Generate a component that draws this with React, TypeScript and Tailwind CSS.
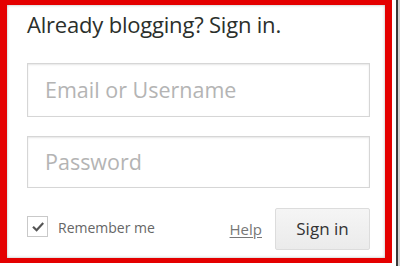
import React from "react";

export default function App() {
  const font = { fontFamily: '"Open Sans", "Noto Sans", sans-serif' };
  return (
    <div className="w-[400px] h-[266px] bg-white flex overflow-hidden" style={font}>
      <div className="w-[392px] h-[263px] border-l-[7px] border-r-[7px] border-t-[5px] border-b-[5px] border-[#e40000] bg-white shadow-[inset_0_0_3px_rgba(0,0,0,0.3)] flex flex-col pl-[20px] pr-[15px]">
        <div className="mt-[5px] text-[22px] leading-[28px] text-[#2b2f2b] tracking-[-0.2px]">
          Already blogging? Sign in.
        </div>
        <div className="mt-[25px] h-[54px] border border-[#d6d6d6] bg-white shadow-[inset_0_1px_2px_rgba(0,0,0,0.1)] flex items-center pl-[17px] text-[21.5px] text-[#b4b4b4]">
          Email or Username
        </div>
        <div className="mt-[19px] h-[52px] border border-[#d6d6d6] bg-white shadow-[inset_0_1px_2px_rgba(0,0,0,0.1)] flex items-center pl-[17px] text-[21.5px] text-[#b4b4b4]">
          Password
        </div>
        <div className="mt-[20px] flex items-center h-[42px]">
          <div className="w-[21px] h-[21px] border border-[#c9c9c9] bg-white flex items-center justify-center -mt-[5px]">
            <svg width="12" height="10" viewBox="0 0 12 10">
              <path d="M1.8 5.5 L4.6 8.2 L10.5 1.8" fill="none" stroke="#555" strokeWidth="2.2" strokeLinecap="square" />
            </svg>
          </div>
          <div className="ml-[10px] -mt-[3px] text-[14px] text-[#666]">Remember me</div>
          <div className="ml-auto mr-[13px] text-[15px] text-[#777] underline underline-offset-2">Help</div>
          <div className="w-[95px] h-[42px] border border-[#dcdcdc] rounded-[2px] bg-gradient-to-b from-[#f5f5f5] to-[#ebebeb] flex items-center justify-center text-[17px] text-[#333]">
            Sign in
          </div>
        </div>
      </div>
      <div className="w-[4px] h-full bg-white" />
      <div className="w-[2px] h-full bg-[#3a3a3a]" />
      <div className="w-[2px] h-full bg-[#d0d0d0]" />
    </div>
  );
}
